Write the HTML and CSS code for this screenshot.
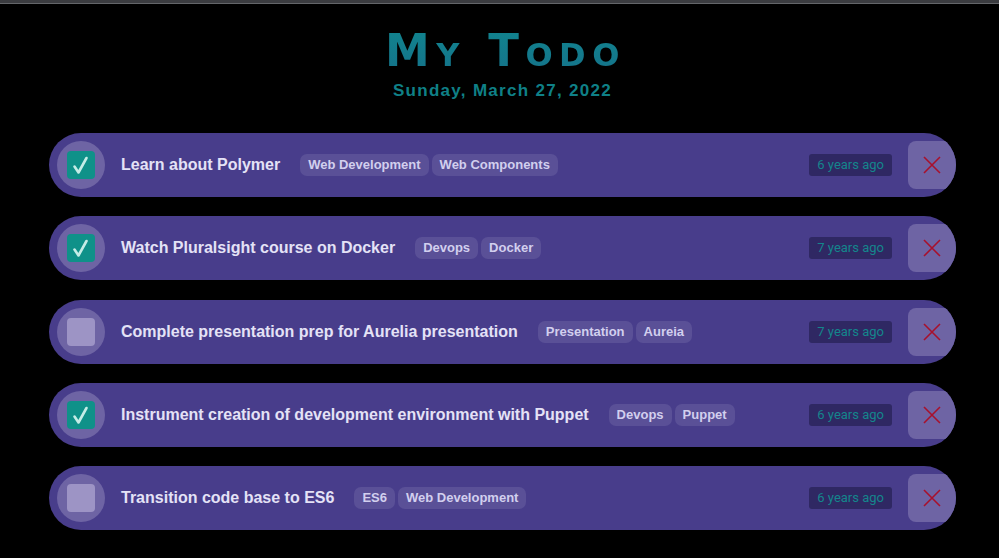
FILE: index.html
```html
<!DOCTYPE html>
<html>
<head>
<meta charset="utf-8">
<link rel="stylesheet" href="styles.css">
</head>
<body>
<div class="topbar"></div>
<header class="header">
  <h1 class="title">My Todo</h1>
  <div class="date">Sunday, March 27, 2022</div>
</header>
<main class="list">
  <div class="todo">
    <div class="check-wrap"><div class="check done"><svg viewBox="0 0 28 28" width="28" height="28"><path d="M7.5 15.5L11.5 21.5L19.5 7" stroke="#c4ece6" stroke-width="2.6" fill="none" stroke-linecap="round" stroke-linejoin="round"/></svg></div></div>
    <span class="text">Learn about Polymer</span>
    <div class="tags"><span class="tag">Web Development</span><span class="tag">Web Components</span></div>
    <span class="time">6 years ago</span>
    <button class="del"><svg viewBox="0 0 20 20" width="20" height="20"><path d="M2 2L18 18M18 2L2 18" stroke="#a8102c" stroke-width="1.6" fill="none"/></svg></button>
  </div>
  <div class="todo">
    <div class="check-wrap"><div class="check done"><svg viewBox="0 0 28 28" width="28" height="28"><path d="M7.5 15.5L11.5 21.5L19.5 7" stroke="#c4ece6" stroke-width="2.6" fill="none" stroke-linecap="round" stroke-linejoin="round"/></svg></div></div>
    <span class="text">Watch Pluralsight course on Docker</span>
    <div class="tags"><span class="tag">Devops</span><span class="tag">Docker</span></div>
    <span class="time">7 years ago</span>
    <button class="del"><svg viewBox="0 0 20 20" width="20" height="20"><path d="M2 2L18 18M18 2L2 18" stroke="#a8102c" stroke-width="1.6" fill="none"/></svg></button>
  </div>
  <div class="todo">
    <div class="check-wrap"><div class="check"></div></div>
    <span class="text">Complete presentation prep for Aurelia presentation</span>
    <div class="tags"><span class="tag">Presentation</span><span class="tag">Aureia</span></div>
    <span class="time">7 years ago</span>
    <button class="del"><svg viewBox="0 0 20 20" width="20" height="20"><path d="M2 2L18 18M18 2L2 18" stroke="#a8102c" stroke-width="1.6" fill="none"/></svg></button>
  </div>
  <div class="todo">
    <div class="check-wrap"><div class="check done"><svg viewBox="0 0 28 28" width="28" height="28"><path d="M7.5 15.5L11.5 21.5L19.5 7" stroke="#c4ece6" stroke-width="2.6" fill="none" stroke-linecap="round" stroke-linejoin="round"/></svg></div></div>
    <span class="text">Instrument creation of development environment with Puppet</span>
    <div class="tags"><span class="tag">Devops</span><span class="tag">Puppet</span></div>
    <span class="time">6 years ago</span>
    <button class="del"><svg viewBox="0 0 20 20" width="20" height="20"><path d="M2 2L18 18M18 2L2 18" stroke="#a8102c" stroke-width="1.6" fill="none"/></svg></button>
  </div>
  <div class="todo">
    <div class="check-wrap"><div class="check"></div></div>
    <span class="text">Transition code base to ES6</span>
    <div class="tags"><span class="tag">ES6</span><span class="tag">Web Development</span></div>
    <span class="time">6 years ago</span>
    <button class="del"><svg viewBox="0 0 20 20" width="20" height="20"><path d="M2 2L18 18M18 2L2 18" stroke="#a8102c" stroke-width="1.6" fill="none"/></svg></button>
  </div>
</main>
</body>
</html>
```
FILE: styles.css
```css
html, body {
  margin: 0;
  padding: 0;
  background: #000;
  font-family: "Liberation Sans", Arial, sans-serif;
}
.topbar {
  height: 3px;
  background: #3b3c40;
  border-bottom: 1px solid #64666a;
}
.header {
  text-align: center;
  padding-left: 6px;
}
.title {
  margin: 0;
  padding-top: 22px;
  font-family: "DejaVu Sans", sans-serif;
  font-size: 45px;
  line-height: 50px;
  font-weight: bold;
  font-variant: small-caps;
  letter-spacing: 6.5px;
  text-indent: 6px;
  background: linear-gradient(#0f8c90, #15728a);
  -webkit-background-clip: text;
  background-clip: text;
  color: transparent;
}
.date {
  margin-top: 5px;
  font-size: 17px;
  font-weight: bold;
  letter-spacing: 1.3px;
  color: #0f8087;
}
.list {
  margin: 32px 0 0 49px;
  width: 907px;
  display: flex;
  flex-direction: column;
  gap: 19.3px;
}
.todo {
  height: 64px;
  background: #483d8b;
  border-radius: 32px;
  overflow: hidden;
  display: flex;
  align-items: center;
  padding-left: 8px;
}
.check-wrap {
  width: 48px;
  height: 48px;
  border-radius: 50%;
  background: #6e64a4;
  display: flex;
  align-items: center;
  justify-content: center;
  flex: none;
}
.check {
  width: 28px;
  height: 28px;
  border-radius: 4px;
  background: #9d94c5;
}
.check svg {
  display: block;
}
.check.done {
  background: #0f9189;
}
.text {
  margin-left: 16px;
  font-size: 16px;
  font-weight: bold;
  color: #e4e2f6;
}
.tags {
  margin-left: 20px;
  display: flex;
  gap: 3px;
}
.tag {
  background: #5a5097;
  color: #d2cfee;
  font-size: 13px;
  font-weight: bold;
  height: 22px;
  line-height: 22px;
  padding: 0 8px;
  border-radius: 7px;
}
.time {
  margin-left: auto;
  background: #2f2863;
  color: #14868c;
  font-family: "Roboto", sans-serif;
  font-size: 13px;
  height: 22px;
  line-height: 22px;
  padding: 0 8px;
  border-radius: 3px;
}
.del {
  margin-left: 16px;
  width: 48px;
  height: 48px;
  border: none;
  border-radius: 8px 0 0 8px;
  background: #6e64a4;
  display: flex;
  align-items: center;
  justify-content: center;
  padding: 0;
  flex: none;
}
```
